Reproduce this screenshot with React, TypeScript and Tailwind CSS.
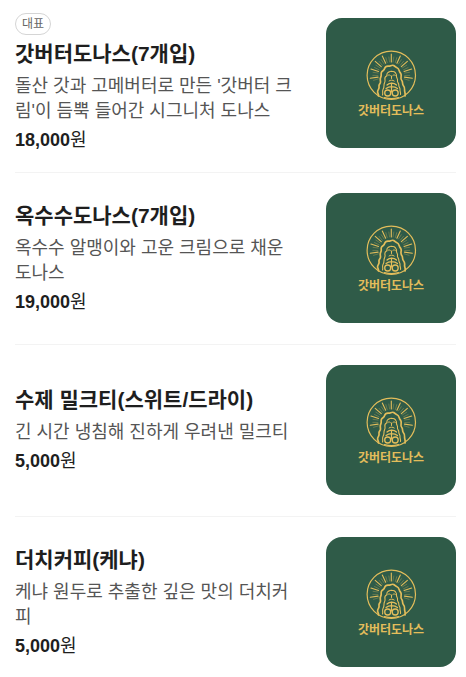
type MenuItem = {
  name: string;
  description: string;
  price: string;
  featured?: boolean;
};

const items: MenuItem[] = [
  {
    name: "갓버터도나스(7개입)",
    description: "돌산 갓과 고메버터로 만든 '갓버터 크림'이 듬뿍 들어간 시그니처 도나스",
    price: "18,000",
    featured: true,
  },
  {
    name: "옥수수도나스(7개입)",
    description: "옥수수 알맹이와 고운 크림으로 채운 도나스",
    price: "19,000",
  },
  {
    name: "수제 밀크티(스위트/드라이)",
    description: "긴 시간 냉침해 진하게 우려낸 밀크티",
    price: "5,000",
  },
  {
    name: "더치커피(케냐)",
    description: "케냐 원두로 추출한 깊은 맛의 더치커피",
    price: "5,000",
  },
];

// Each ray is a long stroke flanked by two short ones.
const rayAngles = [-98, -73, -49, -25, 0, 25, 49, 73, 98];

function Logo() {
  return (
    <svg
      viewBox="0 0 130 130"
      role="img"
      aria-label="갓버터도나스"
      className="size-[130px] shrink-0 rounded-2xl bg-[#2f5b48]"
    >
      <g fill="none" stroke="#e3bd5b" strokeLinecap="round" strokeLinejoin="round">
        <circle cx="65.3" cy="57.3" r="24.2" strokeWidth="1.2" />
        {rayAngles.map((angle) => (
          <g key={angle} transform={`rotate(${angle} 65.3 57.3)`}>
            <path d="M65.3 36v8" strokeWidth="1.1" />
            <path d="M62.8 39l.8 5M67.8 39l-.8 5" strokeWidth="0.6" opacity="0.5" />
          </g>
        ))}
        <path
          d="M52.5 78c.5-2-1.500-3-.8-5s1.800-2.500 1.300-4.500 1.500-2.500 1.500-4.500-.8-3 .3-5-.3-3.500.8-5 2.400-1.500 3-3.500 2.200-2.500 4-2.300 3.200-1.700 5-.7 1.800 1.800 3.400 2.300 2 2.200 2.500 3.700 2 2 1.700 4-.7 3.500.6 5 .2 3.500 1.500 5 1.600 2.500 1.300 4.500 1.200 3 .4 6"
          strokeWidth="1.7"
        />
        <path
          d="M56.500 77c.8-2-.6-3.500.5-5.500s1-2.500 1-4.500 1.500-3 1-5 .5-3.500 1.500-4-.3-3 1.500-3.600 2-1.400 3.500-1 2.500-.4 3.500 1 1.800 1.600 1.500 3.600 1.500 2.500 1 4.500 1.500 2.500 1.300 4.500 1.400 2.500 1.200 4.500.9 3 .5 5"
          strokeWidth="1.1"
        />
        <path
          d="M61.800 57.500c.8-.8 1.800-.8 2.600 0M66.800 57.500c.8-.8 1.800-.8 2.600 0M65.500 58v2.500M63 63c1.500-1.200 3.700-1.200 5.200 0"
          strokeWidth="1"
        />
        <path
          d="M61 67c2.500-2.500 7-2.500 9.500 0M60 70.500c3-2.500 8.500-2.500 11.500 0M65.500 65v9"
          strokeWidth="1.2"
        />
        <circle cx="61.7" cy="75" r="3" strokeWidth="1.3" />
        <circle cx="69.2" cy="75" r="3" strokeWidth="1.3" />
        <path d="M58.500 79.500c4.500 1.500 9.500 1.500 14 0" strokeWidth="1.2" />
      </g>
      <text
        x="65"
        y="97"
        textAnchor="middle"
        className="fill-[#e3bd5b] font-['Noto_Sans_CJK_KR',sans-serif] text-[12px] font-bold"
      >
        갓버터도나스
      </text>
    </svg>
  );
}

function MenuRow({ item }: { item: MenuItem }) {
  return (
    <li className="flex items-center justify-between gap-7 border-t border-[#f3f3f3] pt-5 pb-[21px] first:border-t-0 first:pt-[13px] first:pb-[19px] last:pb-0">
      <div className="min-w-0 flex-1">
        {item.featured && (
          <span className="mb-[5px] flex h-[22px] w-9 items-center justify-center rounded-full border border-[#d5d5d5] text-[12px] text-[#666]">
            대표
          </span>
        )}
        <h3 className="text-[21px] leading-[27px] font-bold text-[#1e1e1e]">{item.name}</h3>
        <p className="mt-[7px] text-[18px] leading-[25px] break-all text-[#555]">
          {item.description}
        </p>
        <p className="mt-1 text-[18px] leading-[25px] text-[#1e1e1e]">
          <strong className="font-bold">{item.price}</strong>원
        </p>
      </div>
      <Logo />
    </li>
  );
}

export default function App() {
  return (
    <main className="bg-white pr-[10px] pl-[15px] font-['Liberation_Sans','Noto_Sans_CJK_KR',sans-serif]">
      <ul>
        {items.map((item) => (
          <MenuRow key={item.name} item={item} />
        ))}
      </ul>
    </main>
  );
}
